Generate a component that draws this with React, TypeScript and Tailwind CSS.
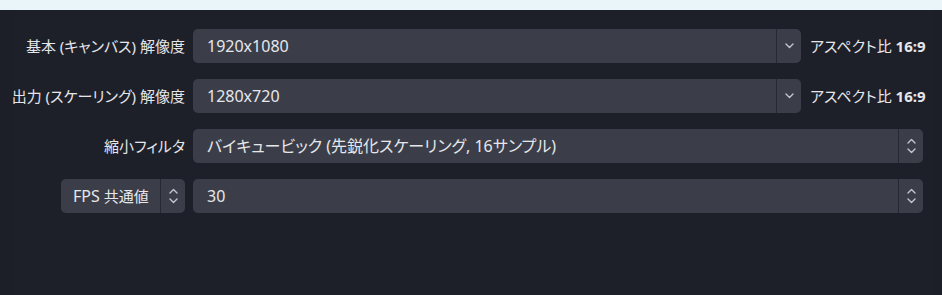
import React from 'react';

const Chevron = ({ up = false }: { up?: boolean }) => (
    <svg width="9" height="6" viewBox="0 0 9 6" fill="none" className="block">
        <path
            d={up ? 'M1 5L4.5 1.5L8 5' : 'M1 1L4.5 4.5L8 1'}
            stroke="#c3c6ce"
            strokeWidth="1.4"
            strokeLinecap="round"
            strokeLinejoin="round"
        />
    </svg>
);

const Spinner = () => (
    <div className="flex flex-col items-center gap-[4px]">
        <Chevron up />
        <Chevron />
    </div>
);

// combo box with a button section at its right end
const Field = ({ value, spin = false, className = '' }: { value: string; spin?: boolean; className?: string }) => (
    <div className={`flex h-[34px] rounded-[5px] bg-[#3b3e49] ${className}`}>
        <div className="flex flex-1 items-center pl-[14px] text-[16px] text-[#e6e7eb] whitespace-nowrap">{value}</div>
        <div className="flex w-[25px] items-center justify-center border-l border-[#262832]">
            {spin ? <Spinner /> : <Chevron />}
        </div>
    </div>
);

const Label = ({ children }: { children: React.ReactNode }) => (
    <div className="flex h-[34px] items-center justify-end text-[15px] text-[#e4e6ea] whitespace-nowrap">{children}</div>
);

const Aspect = () => (
    <div className="flex items-center pl-[9px] text-[15px] text-[#e6e7eb] whitespace-nowrap">
        アスペクト比&nbsp;<span className="font-bold">16:9</span>
    </div>
);

export default function App() {
    return (
        <div className="flex h-[295px] w-[942px] flex-col bg-[#1d1f28] font-['Noto_Sans','Noto_Sans_CJK_JP',sans-serif] [font-feature-settings:'palt']">
            <div className="h-[10px] bg-[#e9f5f8]" />
            <div className="ml-[14px] w-[918px] flex-1 bg-[#1e2029] pt-[19px]">
                <div className="grid grid-cols-[171px_730px] gap-x-2 gap-y-4">
                    <Label>基本 (キャンバス) 解像度</Label>
                    <div className="flex">
                        <Field value="1920x1080" className="w-[608px] shrink-0" />
                        <Aspect />
                    </div>

                    <Label>出力 (スケーリング) 解像度</Label>
                    <div className="flex">
                        <Field value="1280x720" className="w-[608px] shrink-0" />
                        <Aspect />
                    </div>

                    <Label>縮小フィルタ</Label>
                    <Field value="バイキュービック (先鋭化スケーリング, 16サンプル)" spin />

                    <div className="flex justify-end">
                        <div className="flex h-[34px] w-[124px] rounded-[5px] bg-[#3b3e49]">
                            <div className="flex flex-1 items-center pl-[12px] text-[15px] text-[#e6e7eb] whitespace-nowrap">
                                <span className="text-[16px]">FPS</span>&nbsp;共通値
                            </div>
                            <div className="flex w-[25px] items-center justify-center border-l border-[#262832]">
                                <Spinner />
                            </div>
                        </div>
                    </div>
                    <Field value="30" spin />
                </div>
            </div>
        </div>
    );
}
